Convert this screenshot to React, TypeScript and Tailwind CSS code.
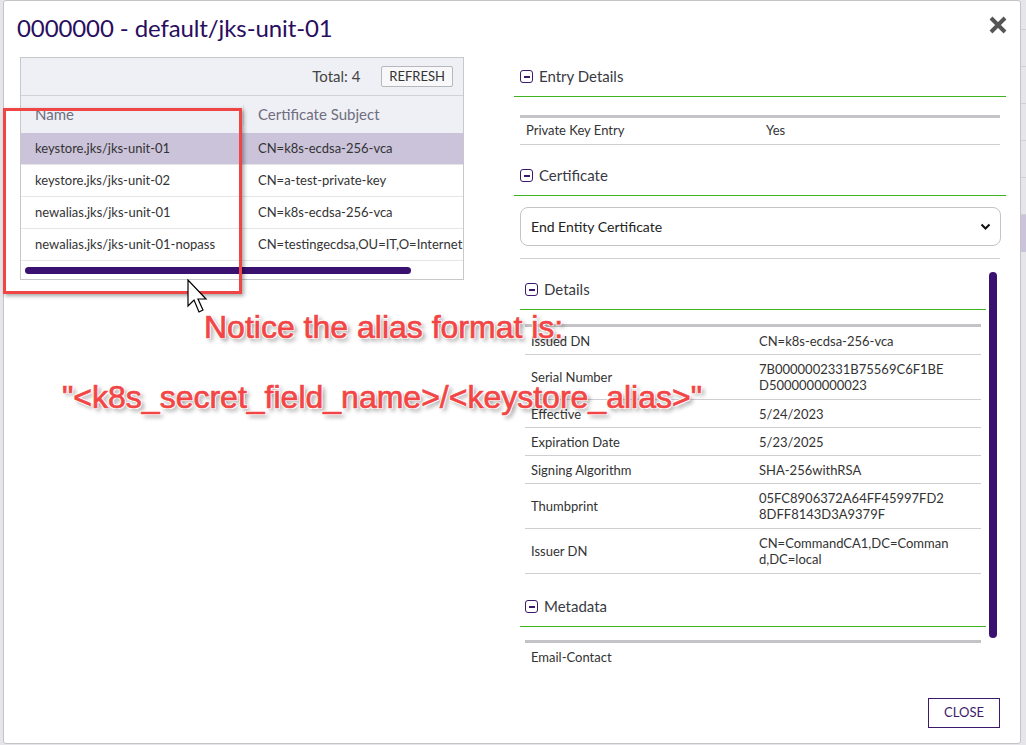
import React from 'react';

const rows = [
  { name: 'keystore.jks/jks-unit-01', subject: 'CN=k8s-ecdsa-256-vca', selected: true },
  { name: 'keystore.jks/jks-unit-02', subject: 'CN=a-test-private-key' },
  { name: 'newalias.jks/jks-unit-01', subject: 'CN=k8s-ecdsa-256-vca' },
  { name: 'newalias.jks/jks-unit-01-nopass', subject: 'CN=testingecdsa,OU=IT,O=Internet' },
];

const details: [string, string[]][] = [
  ['Issued DN', ['CN=k8s-ecdsa-256-vca']],
  ['Serial Number', ['7B0000002331B75569C6F1BE', 'D5000000000023']],
  ['Effective', ['5/24/2023']],
  ['Expiration Date', ['5/23/2025']],
  ['Signing Algorithm', ['SHA-256withRSA']],
  ['Thumbprint', ['05FC8906372A64FF45997FD2', '8DFF8143D3A9379F']],
  ['Issuer DN', ['CN=CommandCA1,DC=Comman', 'd,DC=local']],
];

function MinusBox() {
  return (
    <span className="w-[13px] h-[13px] rounded-[3px] border-[1.5px] border-[#3b1a6b] flex items-center justify-center shrink-0">
      <span className="w-[6px] h-[2px] bg-[#3b1a6b]" />
    </span>
  );
}

function SectionHeader({ title, indent = 6 }: { title: string; indent?: number }) {
  return (
    <div className={`h-[40px] flex items-center gap-[6px] border-b border-[#3fb21f] ${indent === 6 ? 'pl-[6px]' : 'pl-[5px]'}`}>
      <MinusBox />
      <span className="text-[15px] text-[#3a3a44]">{title}</span>
    </div>
  );
}

const annot =
  'absolute text-[32px] leading-[40px] text-[#f24545] whitespace-nowrap [-webkit-text-stroke:0.7px_#f24545] [text-shadow:1px_1px_0_#fff,-1px_-1px_0_#fff,1px_-1px_0_#fff,-1px_1px_0_#fff,3px_3px_4px_rgba(0,0,0,0.45)]';

export default function App() {
  return (
    <div className="w-[1026px] h-[745px] bg-[#e6e6ea] flex overflow-hidden relative" style={{ fontFamily: 'Lato, "Open Sans", sans-serif' }}>
      <div className="w-[3px]" />
      {/* modal */}
      <div className="w-[1018px] h-[744px] bg-white border border-[#c4c4c8] rounded-[3px] flex flex-col">
        <div className="flex items-start justify-between pl-[13px] pr-[12px] pt-[9px] h-[56px]">
          <h1 className="text-[24px] text-[#2a0e5e] tracking-[-0.1px]">0000000 - default/jks-unit-01</h1>
          <svg width="20" height="20" viewBox="0 0 20 20" className="mt-[5px]">
            <path d="M3 3 L17 17 M17 3 L3 17" stroke="#555" strokeWidth="4" strokeLinecap="butt" />
          </svg>
        </div>
        <div className="flex gap-[50px] pl-[16px]">
          {/* left table */}
          <div className="w-[444px] h-[223px] border border-[#c8c8cc] flex flex-col overflow-hidden">
            <div className="h-[38px] bg-[#eff0f5] border-b border-[#d2d3da] flex items-center justify-end gap-[21px] pr-[10px]">
              <span className="text-[15px] text-[#444]">Total: 4</span>
              <button className="h-[21px] px-[7px] border border-[#b8b8bc] rounded-[2px] bg-[#f8f8fa] text-[13px] text-[#333] leading-none">REFRESH</button>
            </div>
            <div className="h-[37px] bg-[#eff0f5] flex items-center text-[15px] text-[#6e6e7e]">
              <div className="w-[223px] pl-[14px] border-r border-[#dcdce2] h-[20px] flex items-center">Name</div>
              <div className="pl-[14px] whitespace-nowrap">Certificate Subject</div>
            </div>
            {rows.map((r) => (
              <div key={r.name} className={`h-[32px] flex items-center text-[13px] text-[#333] border-b border-[#e6e6ea] whitespace-nowrap ${r.selected ? 'bg-[#cbc3da]' : 'bg-white'}`}>
                <div className="w-[223px] pl-[14px] shrink-0">{r.name}</div>
                <div className="pl-[14px]">{r.subject}</div>
              </div>
            ))}
            <div className="flex-1 flex items-center pl-[4px]">
              <div className="w-[386px] h-[7px] rounded-full bg-[#3a1170]" />
            </div>
          </div>

          {/* right panel */}
          <div className="w-[492px] flex flex-col">
            <SectionHeader title="Entry Details" />
            <div className="mt-[18px] mx-[6px] border-t-[3px] border-[#c4c4c8]">
              <div className="h-[27px] flex items-center text-[13px] text-[#333] border-b border-[#cfcfd3]">
                <div className="w-[246px] pl-[6px]">Private Key Entry</div>
                <div>Yes</div>
              </div>
            </div>
            <div className="mt-[11px]">
              <SectionHeader title="Certificate" />
            </div>
            <div className="mt-[11px] ml-[6px] w-[481px] h-[39px] rounded-[8px] border border-[#c4c4c8] flex items-center justify-between pl-[10px] pr-[9px]">
              <span className="text-[14px] text-[#222]">End Entity Certificate</span>
              <svg width="11" height="8" viewBox="0 0 11 8">
                <path d="M1.5 1.5 L5.5 5.5 L9.5 1.5" stroke="#111" strokeWidth="2" fill="none" />
              </svg>
            </div>
            <div className="mt-[12px] mx-[6px] border-t border-[#cfcfd3]" />
            {/* scroll area */}
            <div className="h-[422px] flex overflow-hidden">
              <div className="w-[472px] pl-[6px] flex flex-col">
                <div className="mt-[11px]">
                  <SectionHeader title="Details" indent={5} />
                </div>
                <div className="mt-[14px] mx-[5px] border-t-[3px] border-[#c4c4c8]">
                  {details.map(([k, v]) => (
                    <div key={k} className={`pt-[6px] flex items-center text-[13px] leading-[16px] text-[#333] border-b border-[#cfcfd3] ${v.length > 1 ? 'pb-[6px]' : 'pb-[5px]'}`}>
                      <div className="w-[234px] pl-[6px] shrink-0">{k}</div>
                      <div>
                        {v.map((line) => (
                          <div key={line}>{line}</div>
                        ))}
                      </div>
                    </div>
                  ))}
                </div>
                <div className="mt-[13px]">
                  <SectionHeader title="Metadata" indent={5} />
                </div>
                <div className="mt-[13px] mx-[5px] border-t-[3px] border-[#c4c4c8]">
                  <div className="pt-[6px] pb-[5px] text-[13px] leading-[16px] text-[#333] pl-[6px]">Email-Contact</div>
                </div>
              </div>
              <div className="w-[8px] ml-[3px] mt-[13px] h-[366px] rounded-full bg-[#3a1170]" />
            </div>
            <div className="flex justify-end mt-[17px] pr-[6px]">
              <button className="w-[72px] h-[30px] border border-[#3b1a6b] text-[13px] text-[#3b1a6b]">CLOSE</button>
            </div>
          </div>
        </div>
      </div>
      {/* page behind */}
      <div className="flex-1 flex flex-col">
        <div className="h-[30px] border-b border-[#d0d0d4]" />
        <div className="h-[37px] border-b border-[#d0d0d4]" />
        <div className="h-[37px] border-b border-[#d0d0d4]" />
        <div className="h-[37px] border-b border-[#d0d0d4]" />
        <div className="h-[37px] border-b border-[#d0d0d4]" />
        <div className="h-[37px] border-b border-[#d0d0d4]" />
        <div className="h-[37px] bg-[#cbc3da]" />
      </div>

      {/* annotations */}
      <div className="absolute left-[3px] top-[108px] w-[239px] h-[186px] border-[3px] border-[#f04545] shadow-[2px_2px_4px_rgba(0,0,0,0.35)]" />
      <svg className="absolute left-[187px] top-[279px]" width="26" height="38" viewBox="0 0 26 38">
        <path d="M1 1 L1 27 L7 21 L12 33 L16 31 L11 20 L19 20 Z" fill="white" stroke="black" strokeWidth="1.2" strokeLinejoin="miter" />
      </svg>
      <div className={`${annot} left-[204px] top-[307px]`} style={{ fontFamily: '"Liberation Sans", Arial, sans-serif' }}>
        Notice the alias format is:
      </div>
      <div className={`${annot} left-[62px] top-[377px]`} style={{ fontFamily: '"Liberation Sans", Arial, sans-serif' }}>
        "&lt;k8s_secret_field_name&gt;/&lt;keystore_alias&gt;"
      </div>
    </div>
  );
}
